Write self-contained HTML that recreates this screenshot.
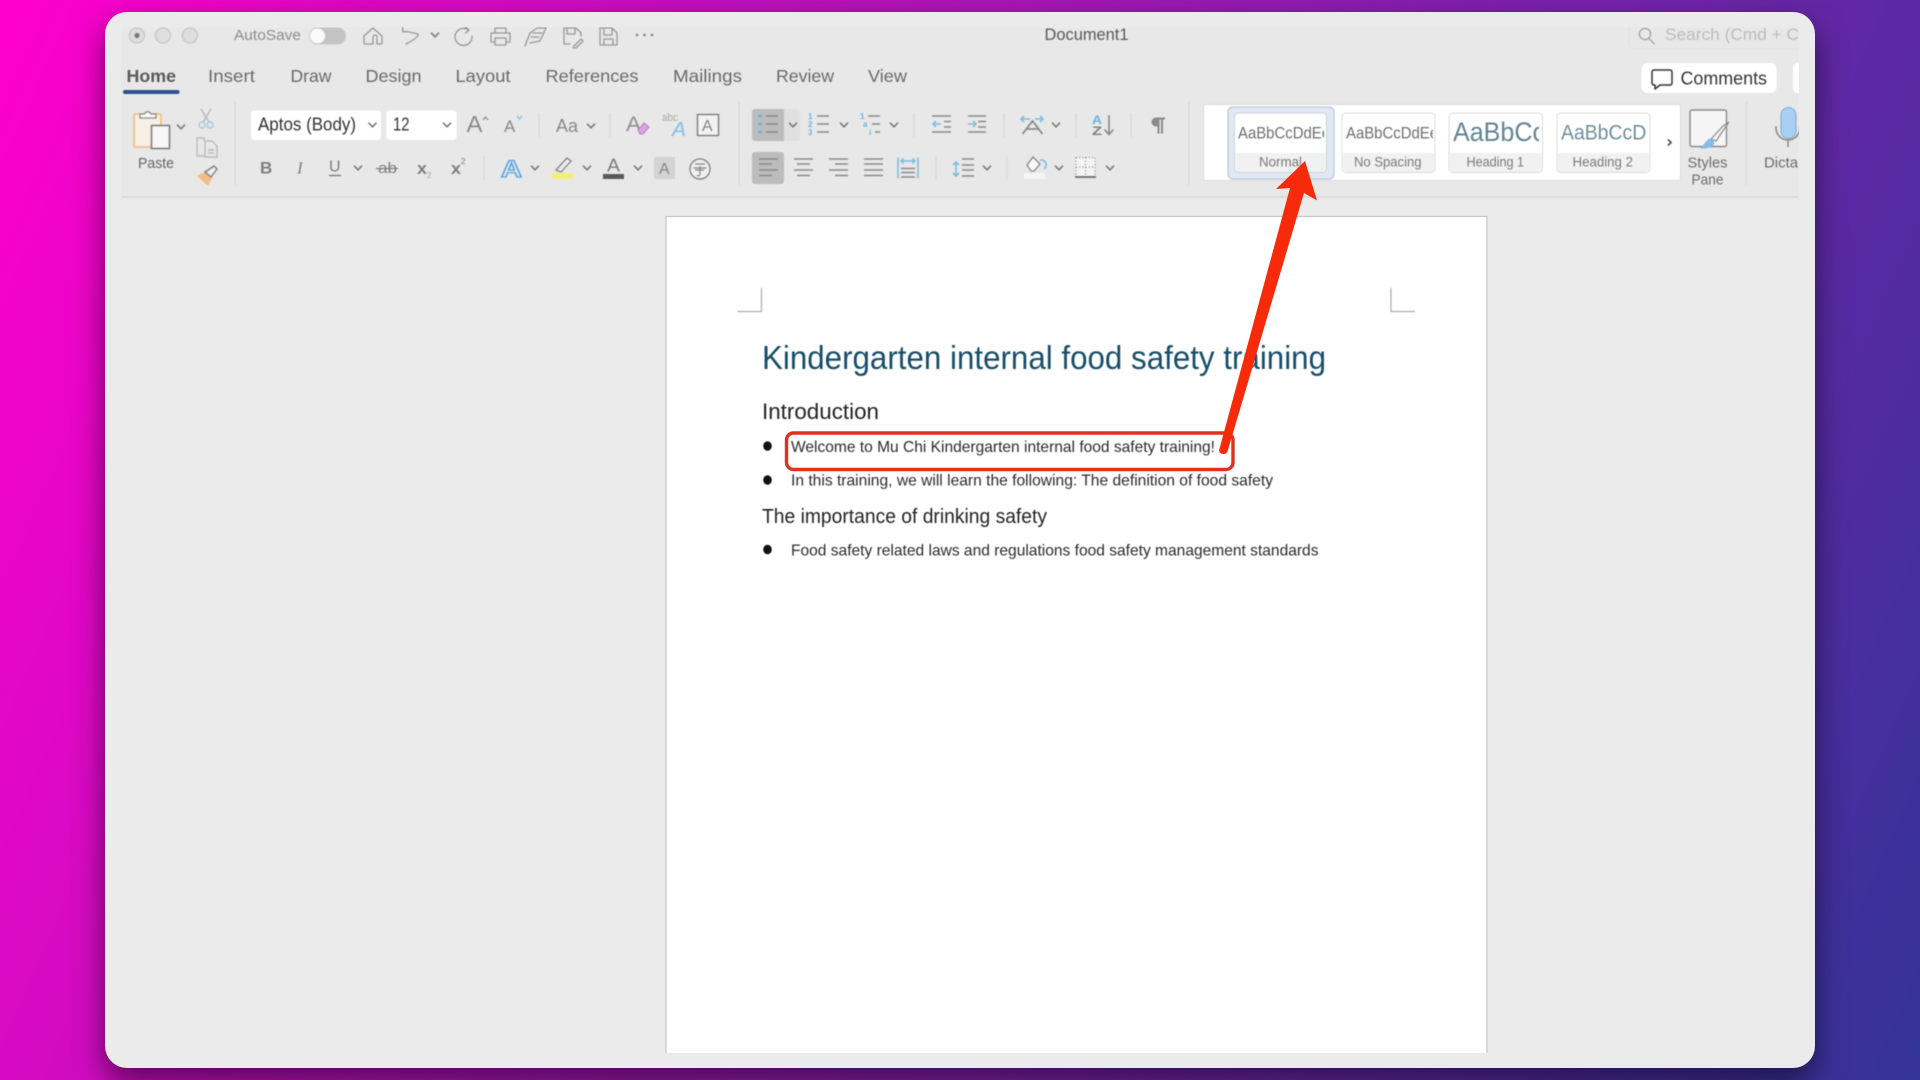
<!DOCTYPE html>
<html lang="en"><head><meta charset="utf-8"><title>Document1</title>
<style>
html,body{margin:0;padding:0;width:1920px;height:1080px;overflow:hidden}
body{background:linear-gradient(114deg,#ff00cc,#333399)}
#win{position:absolute;left:105px;top:12px;width:1710px;height:1056px;border-radius:22px;background:#ebebeb;box-shadow:0 14px 30px rgba(0,0,0,.55)}
svg{position:absolute;left:0;top:0}
text{font-family:"Liberation Sans",sans-serif}
.s{fill:none;stroke:#989898;stroke-width:1.3;stroke-linecap:round;stroke-linejoin:round}
.t{stroke:#8a8a8a;stroke-width:1.6;fill:none}
.b{stroke:#7fbce0;stroke-width:1.6;fill:none}
.sep{stroke:#d8d8d8;stroke-width:1.3}
</style></head><body>
<div id="win"></div>
<svg width="1920" height="1080" viewBox="0 0 1920 1080">
<defs>
<path id="c" d="M-3.5-1.8 0 1.8 3.5-1.800" fill="none" stroke="#7c7c7c" stroke-width="1.7" stroke-linecap="round" stroke-linejoin="round"/>
<clipPath id="in"><rect x="121" y="27" width="1678" height="1026"/></clipPath>
<clipPath id="g1"><rect x="1236" y="113" width="88" height="40"/></clipPath>
<clipPath id="g2"><rect x="1344" y="113" width="89" height="40"/></clipPath>
<clipPath id="g3"><rect x="1451" y="113" width="88" height="40"/></clipPath>
<clipPath id="g4"><rect x="1559" y="113" width="88" height="40"/></clipPath>
</defs>
<g clip-path="url(#in)" style="filter:blur(.6px)">
<rect x="121" y="27" width="1678" height="170" fill="#e8e8e8"/>
<rect x="121" y="196" width="1678" height="2" fill="#dadada"/>

<!-- title bar -->
<g fill="#dedede" stroke="#c6c6c6" stroke-width="1.3"><circle cx="137" cy="35.500" r="7.500"/><circle cx="163" cy="35.500" r="7.500"/><circle cx="190" cy="35.500" r="7.500"/></g>
<circle cx="137" cy="35.500" r="2.600" fill="#7c7c7c"/>
<text x="234" y="40" font-size="15" fill="#8c8c8c" textLength="67" lengthAdjust="spacingAndGlyphs">AutoSave</text>
<rect x="309" y="27.500" width="37" height="17" rx="8.500" fill="#c4c4c4"/><circle cx="317.500" cy="36" r="8" fill="#fbfbfb" stroke="#c9c9c9"/>
<path class="s" d="M364 36 373 28l9 8v7a1.500 1.500 0 0 1-1.500 1H377v-7a2 2 0 0 0-4 0v7h-7.500a1.500 1.500 0 0 1-1.500-1z"/>
<path class="s" d="M402.700 27v4.700h5.300l10 2.300c1 3-6 7-12 10"/>
<use href="#c" x="435" y="35"/>
<path class="s" d="M468.500 30a8.500 8.500 0 1 0 3.500 6M465 26.500l4 3.500-3.500 3"/>
<path class="s" d="M495 33v-5h11v5M491 33h19v9h-4M495 42h-4v-9M495 38h11v7h-11z"/>
<path class="s" d="M525 46l5-13 7-5h9l-6 13-10 2M533 33h9M531 37h8"/>
<path class="s" d="M564 28h12l5 5v3M564 28v16h6M567 28v6h8v-6M574 46l7-7 2 2-7 7h-3z"/>
<path class="s" d="M600 28h12l5 5v12h-17zM604 28v7h8v-7M604 45v-6h9v6"/>
<g fill="#8c8c8c"><circle cx="637" cy="35" r="1.400"/><circle cx="644.500" cy="35" r="1.400"/><circle cx="652" cy="35" r="1.400"/></g>
<text x="1044.500" y="40" font-size="16.500" fill="#585858" textLength="84" lengthAdjust="spacingAndGlyphs">Document1</text>
<rect x="1629" y="22" width="190" height="27" rx="6" fill="none" stroke="#e2e2e2"/>
<circle cx="1645" cy="34" r="5.600" fill="none" stroke="#a2a2a2" stroke-width="1.300"/><path fill="none" stroke="#a2a2a2" stroke-width="1.300" d="M1649 38.500 1654.500 44"/>
<text x="1665" y="40" font-size="17" fill="#bcbcbc" textLength="134" lengthAdjust="spacingAndGlyphs">Search (Cmd + C</text>

<!-- tabs -->
<g font-size="17.500" fill="#6a6a6a">
<text x="126.500" y="82" font-weight="700" fill="#5a5a5a" textLength="49.500" lengthAdjust="spacingAndGlyphs">Home</text>
<text x="208" y="82" textLength="47" lengthAdjust="spacingAndGlyphs">Insert</text>
<text x="290.500" y="82" textLength="41" lengthAdjust="spacingAndGlyphs">Draw</text>
<text x="365.500" y="82" textLength="56" lengthAdjust="spacingAndGlyphs">Design</text>
<text x="455.500" y="82" textLength="55" lengthAdjust="spacingAndGlyphs">Layout</text>
<text x="545.500" y="82" textLength="93" lengthAdjust="spacingAndGlyphs">References</text>
<text x="673" y="82" textLength="69" lengthAdjust="spacingAndGlyphs">Mailings</text>
<text x="776" y="82" textLength="58" lengthAdjust="spacingAndGlyphs">Review</text>
<text x="868" y="82" textLength="39" lengthAdjust="spacingAndGlyphs">View</text>
</g>
<rect x="123" y="90" width="56.500" height="4" rx="2" fill="#2c4f8e"/>
<rect x="1641.500" y="63" width="135" height="30" rx="6" fill="#fff"/>
<path d="M1654 70h16a2 2 0 0 1 2 2v11a2 2 0 0 1-2 2h-10l-5 4v-4h-1a2 2 0 0 1-2-2V72a2 2 0 0 1 2-2z" fill="none" stroke="#333" stroke-width="1.500" stroke-linejoin="round"/>
<text x="1680.500" y="84.500" font-size="18" fill="#333" textLength="86.500" lengthAdjust="spacingAndGlyphs">Comments</text>
<rect x="1793" y="63" width="14" height="30" rx="5" fill="#fff"/>

<!-- separators -->
<g class="sep">
<path d="M235 102v83M739 102v83M1189 102v83M1746.500 102v83"/>
<path d="M539 113v24M610 113v24M484 156v24M914 113v24M1004 113v24M1076 113v24M1131 113v24M936 156v24M1007 156v24"/>
</g>

<!-- clipboard group -->
<rect x="134" y="114" width="27" height="33" rx="1.500" fill="#f6efe4" stroke="#f2c48d" stroke-width="2"/>
<path d="M140 118v-4h4.500a3.500 3.500 0 0 1 6.500 0h5v4z" fill="#fafafa" stroke="#8c8c8c" stroke-width="1.300"/>
<rect x="151.500" y="125.500" width="18" height="23" fill="#f7f7f7" stroke="#808080" stroke-width="1.600"/>
<use href="#c" x="181" y="127"/>
<text x="138" y="168" font-size="15" fill="#666" textLength="36" lengthAdjust="spacingAndGlyphs">Paste</text>
<path d="M201 109l8 13M211 109l-8 13" fill="none" stroke="#b6bcc2" stroke-width="1.500"/>
<circle cx="202" cy="125" r="3" fill="none" stroke="#a9cbe0" stroke-width="1.500"/><circle cx="210" cy="125" r="3" fill="none" stroke="#a9cbe0" stroke-width="1.500"/>
<path d="M204 141v-3h-7v18h7M205 141h7l5 5v11h-12zM208 150h6M208 153h6" fill="none" stroke="#bcbcbc" stroke-width="1.400"/>
<path d="M197 176l9-5 6 7-4 8z" fill="#f3bd85"/><path d="M205 172l9-6 3 3-6 8z" fill="#ededed" stroke="#808080" stroke-width="1.400"/>

<!-- font row -->
<rect x="251" y="110.500" width="130" height="29.500" rx="3" fill="#fff"/>
<rect x="386.500" y="110.500" width="70" height="29.500" rx="3" fill="#fff"/>
<text x="258" y="130.500" font-size="18" fill="#333" textLength="98" lengthAdjust="spacingAndGlyphs">Aptos (Body)</text>
<text x="393" y="130.500" font-size="18" fill="#333" textLength="16.500" lengthAdjust="spacingAndGlyphs">12</text>
<use href="#c" x="372.500" y="125"/><use href="#c" x="447" y="125"/>
<text x="466.500" y="132" font-size="23" fill="#8a8a8a" textLength="16" lengthAdjust="spacingAndGlyphs">A</text>
<path d="M483 120l2.500-3 2.500 3" fill="none" stroke="#9a9a9a" stroke-width="1.400"/>
<text x="504" y="132" font-size="17" fill="#8a8a8a">A</text>
<path d="M517 116l2.500 3 2.500-3" fill="none" stroke="#8fc2e2" stroke-width="1.400"/>
<text x="556" y="132" font-size="18" fill="#8a8a8a" textLength="22" lengthAdjust="spacingAndGlyphs">Aa</text>
<use href="#c" x="591" y="126"/>
<text x="626" y="131" font-size="21" fill="#8e8e8e" textLength="15" lengthAdjust="spacingAndGlyphs">A</text>
<path d="M638 130l6-7 5 4-6 7h-3z" fill="#dba3dc" stroke="#b87fc0"/>
<text x="662" y="121" font-size="11" fill="#a8a8a8" textLength="16" lengthAdjust="spacingAndGlyphs">abc</text>
<text x="672" y="136" font-size="20" font-style="italic" fill="#7fc0e4" textLength="14" lengthAdjust="spacingAndGlyphs">A</text>
<rect x="697.500" y="114.500" width="21" height="21" fill="#f2f2f2" stroke="#7c7c7c" stroke-width="1.400"/>
<text x="702" y="131" font-size="16" fill="#848484">A</text>

<g fill="#7f7f7f">
<text x="260" y="173.500" font-size="17" font-weight="700">B</text>
<text x="297" y="173.500" font-size="17" font-style="italic" style="font-family:'Liberation Serif',serif">I</text>
<text x="329" y="171.500" font-size="16">U</text>
<text x="378" y="173" font-size="15" textLength="19" lengthAdjust="spacingAndGlyphs">ab</text>
<text x="417" y="174" font-size="17" font-weight="700" textLength="10" lengthAdjust="spacingAndGlyphs">x</text>
<text x="451" y="174" font-size="17" font-weight="700" textLength="10" lengthAdjust="spacingAndGlyphs">x</text>
</g>
<path d="M329 175.500h12" stroke="#7f7f7f" stroke-width="1.400"/><path d="M376 168.500h22" stroke="#7f7f7f" stroke-width="1.200"/>
<use href="#c" x="358" y="168"/>
<text x="427" y="178" font-size="8" fill="#6fb4dc">2</text><text x="461" y="164" font-size="8" fill="#777">2</text>
<text x="501" y="177" font-size="24" font-weight="700" fill="#d7e8f5" stroke="#5ba4d8" stroke-width="1.300" textLength="21" lengthAdjust="spacingAndGlyphs">A</text>
<use href="#c" x="535" y="168"/>
<path d="M556 170l11-12 4 3-10 11z" fill="#ececec" stroke="#858585" stroke-width="1.300"/>
<rect x="552" y="173" width="21" height="6" fill="#f4ee7c"/>
<use href="#c" x="587" y="168"/>
<text x="607" y="171.500" font-size="18" fill="#7f7f7f" textLength="13" lengthAdjust="spacingAndGlyphs">A</text>
<rect x="603" y="174" width="21" height="5" fill="#595959"/>
<use href="#c" x="638" y="168"/>
<rect x="654" y="157" width="21" height="22" fill="#d3d3d3"/><text x="659" y="174" font-size="16" fill="#858585">A</text>
<circle cx="700" cy="169" r="10" fill="#f0f0f0" stroke="#888" stroke-width="1.400"/>
<path d="M695 164h10M693.500 168h13M700 166v8c0 1.500-1 2-3 1.500M695 170h9" fill="none" stroke="#888" stroke-width="1.200"/>

<!-- paragraph row 1 -->
<rect x="752" y="109" width="48" height="32" rx="3" fill="#e0e0e0"/>
<path d="M755 109h29v32h-29a3 3 0 0 1-3-3v-26a3 3 0 0 1 3-3z" fill="#bcbcbc"/>
<g fill="#6cb4e0"><rect x="758" y="114.500" width="4" height="3"/><rect x="758" y="122.500" width="4" height="3"/><rect x="758" y="130.500" width="4" height="3"/></g>
<path class="t" d="M766 116h12M766 124h12M766 132h12"/>
<use href="#c" x="793" y="125"/>
<g font-size="8" fill="#6cb4e0" font-weight="700"><text x="808" y="119">1</text><text x="808" y="127">2</text><text x="808" y="135">3</text></g>
<path class="t" d="M817 116h12M817 124h12M817 132h12"/>
<use href="#c" x="844" y="125"/>
<g font-size="8" fill="#6cb4e0" font-weight="700"><text x="860" y="119">1</text><text x="863" y="127">a</text><text x="869" y="135">i</text></g>
<path class="t" d="M868 116h12M872 124h8M875 132h5"/>
<use href="#c" x="894" y="125"/>
<path class="t" d="M932 116h19M932 132h19M944 121.500h7M944 127h7"/><path class="b" d="M941 124h-8M936 121l-3 3 3 3"/>
<path class="t" d="M968 116h18M968 132h18M978 121.500h8M978 127h8"/><path class="b" d="M968 124h8M973 121l3 3-3 3"/>
<path class="t" d="M1022.500 134l10-13 10 13M1026 129h13" style="stroke-width:1.800"/>
<path class="b" d="M1021 119h9M1024 116l-3 3 3 3M1035 119h8M1040 116l3 3-3 3"/>
<use href="#c" x="1056" y="125"/>
<text x="1092" y="124" font-size="12" font-weight="700" fill="#6cb4e0" textLength="10" lengthAdjust="spacingAndGlyphs">A</text>
<text x="1092" y="135" font-size="12" font-weight="700" fill="#7f7f7f" textLength="10" lengthAdjust="spacingAndGlyphs">Z</text>
<path class="t" d="M1109 115v19M1104.500 129.500l4.500 5 4.500-5"/>
<path d="M1165 117.500h-9a4.500 4.500 0 0 0 0 9h1.500v7h2v-14h1.500v14h2v-14h2z" fill="#8a8a8a"/>

<!-- paragraph row 2 -->
<rect x="752" y="152" width="32" height="32" rx="3" fill="#bcbcbc"/>
<path class="t" d="M759 159h19M759 164h13M759 170h19M759 175.500h13"/>
<path class="t" d="M794 159h19M797 164h13M794 170h19M797 175.500h13"/>
<path class="t" d="M829 159h19M835 164h13M829 170h19M835 175.500h13"/>
<path class="t" d="M864 159h19M864 164h19M864 170h19M864 175.500h19"/>
<path class="b" d="M898 157.500v21M918 157.500v21M901 161h14M903.500 158.500l-2.500 2.500 2.500 2.500M912.500 158.500l2.500 2.500-2.500 2.500"/>
<path class="t" d="M901 168.500h14M901 172.500h14M901 177h14"/>
<path class="b" d="M956 162v14M953 165l3-3 3 3M953 173l3 3 3-3"/>
<path class="t" d="M962 159h12M962 165h12M962 170h12M962 176h12"/>
<use href="#c" x="987" y="168"/>
<path d="M1027 165l6-8 7 7-6 7h-3z" fill="#fafafa" stroke="#858585" stroke-width="1.300"/>
<path d="M1040 160a5 5 0 0 1 4 9" class="b"/>
<rect x="1024" y="173" width="21" height="6" fill="#f4f4f4"/>
<use href="#c" x="1059" y="168"/>
<rect x="1076" y="157.500" width="19" height="19" fill="#f3f3f3"/>
<path d="M1076 157.500h19v19M1076 157.500v19M1085.500 157.500v19M1076 167h19" fill="none" stroke="#8a8a8a" stroke-width="1.200" stroke-dasharray="1 2.200"/>
<rect x="1075" y="176" width="21" height="2" fill="#777"/>
<use href="#c" x="1110" y="168"/>

<!-- styles gallery -->
<rect x="1203.500" y="104.500" width="477" height="76" rx="2" fill="#fff" stroke="#dbdbdb"/>
<rect x="1228" y="107" width="106" height="72" rx="5" fill="#e1e8f1" stroke="#b9c9dd" stroke-width="1.300"/>
<g fill="#f1f1f1" stroke="#dcdcdc">
<rect x="1234.500" y="113" width="92" height="59.500" rx="4" fill="#fff" stroke="#ccd3dc"/>
<rect x="1342" y="113" width="93" height="59.500" rx="4" fill="#fff"/>
<rect x="1449" y="113" width="93.500" height="59.500" rx="4" fill="#fff"/>
<rect x="1557" y="113" width="93" height="59.500" rx="4" fill="#fff"/>
</g>
<g fill="#f1f1f1">
<path d="M1235.500 153h90v15a4 4 0 0 1-4 4h-82a4 4 0 0 1-4-4z"/>
<path d="M1343 153h91v15a4 4 0 0 1-4 4h-83a4 4 0 0 1-4-4z"/>
<path d="M1450 153h91.500v15a4 4 0 0 1-4 4h-83.500a4 4 0 0 1-4-4z"/>
<path d="M1558 153h91v15a4 4 0 0 1-4 4h-83a4 4 0 0 1-4-4z"/>
</g>
<g font-size="16.500" fill="#6f6f6f">
<g clip-path="url(#g1)"><text x="1238" y="138.500" textLength="92" lengthAdjust="spacingAndGlyphs">AaBbCcDdEe</text></g>
<g clip-path="url(#g2)"><text x="1346" y="138.500" textLength="92" lengthAdjust="spacingAndGlyphs">AaBbCcDdEe</text></g>
</g>
<g clip-path="url(#g3)"><text x="1453" y="141" font-size="27" fill="#628493" textLength="92" lengthAdjust="spacingAndGlyphs">AaBbCc</text></g>
<g clip-path="url(#g4)"><text x="1561" y="139.500" font-size="21.500" fill="#6c8e9c" textLength="96" lengthAdjust="spacingAndGlyphs">AaBbCcDd</text></g>
<g font-size="13.500" fill="#7a7a7a">
<text x="1259" y="166.500" textLength="43" lengthAdjust="spacingAndGlyphs">Normal</text>
<text x="1354" y="166.500" textLength="67.500" lengthAdjust="spacingAndGlyphs">No Spacing</text>
<text x="1466.500" y="166.500" textLength="57.500" lengthAdjust="spacingAndGlyphs">Heading 1</text>
<text x="1572.500" y="166.500" textLength="60.500" lengthAdjust="spacingAndGlyphs">Heading 2</text>
</g>
<path d="M1668 139.500l3 3-3 3" fill="none" stroke="#555" stroke-width="1.800"/>

<!-- styles pane -->
<rect x="1690" y="110" width="36.500" height="36.500" rx="2" fill="#f5f5f5" stroke="#8a8a8a" stroke-width="1.400"/>
<path d="M1723 126l6-4-13 19-5-2z" fill="#f2f2f2" stroke="#8a8a8a" stroke-width="1.200"/>
<path d="M1700 148c3-1 5-7 9-9 3-1 6 2 5 5-1 3-9 6-14 4z" fill="#84bce6"/>
<text x="1687.500" y="167.500" font-size="15" fill="#6c6c6c" textLength="40" lengthAdjust="spacingAndGlyphs">Styles</text>
<text x="1691.500" y="184.500" font-size="15" fill="#6c6c6c" textLength="32" lengthAdjust="spacingAndGlyphs">Pane</text>

<!-- dictate -->
<path d="M1776 126v2a12 12 0 0 0 24 0v-2M1788 140v7" fill="none" stroke="#8c8c8c" stroke-width="1.600"/>
<rect x="1781" y="107.500" width="15" height="31" rx="7.500" fill="#a9d0f3" stroke="#7fa9cf"/>
<text x="1764" y="167.500" font-size="15" fill="#6c6c6c" textLength="34" lengthAdjust="spacingAndGlyphs">Dicta</text>
</g>

<!-- page -->
<rect x="666" y="217" width="821" height="836" fill="#fff"/>
<path d="M666 1053V216.500H1487V1053" fill="none" stroke="#cacaca" stroke-width="1.300"/>
<g style="filter:blur(.4px)">
<path d="M737.500 311.500H761.500V288M1391 288V311.500H1415" fill="none" stroke="#aaa" stroke-width="1.200"/>
<text x="762" y="369" font-size="33" fill="#174d68" textLength="564" lengthAdjust="spacingAndGlyphs">Kindergarten internal food safety training</text>
<text x="762" y="419" font-size="22" fill="#222" textLength="117" lengthAdjust="spacingAndGlyphs">Introduction</text>
<g font-size="15.800" fill="#2a2a2a">
<text x="791" y="452" textLength="424" lengthAdjust="spacingAndGlyphs">Welcome to Mu Chi Kindergarten internal food safety training!</text>
<text x="791" y="485.500" textLength="482" lengthAdjust="spacingAndGlyphs">In this training, we will learn the following: The definition of food safety</text>
<text x="791" y="555.500" textLength="527.500" lengthAdjust="spacingAndGlyphs">Food safety related laws and regulations food safety management standards</text>
</g>
<text x="762" y="523" font-size="20" fill="#222" textLength="285" lengthAdjust="spacingAndGlyphs">The importance of drinking safety</text>
<g fill="#111"><ellipse cx="767.500" cy="446" rx="4.300" ry="4.800"/><ellipse cx="767.500" cy="480" rx="4.300" ry="4.800"/><ellipse cx="767.500" cy="549.500" rx="4.300" ry="4.800"/></g>
</g>

<!-- annotations -->
<rect x="786.500" y="433" width="446.500" height="36.500" rx="7" fill="none" stroke="#e0301f" stroke-width="3.400"/>
<path d="M1305 161 1317 200.500 1304 193 1227.500 451.500c-1.500 4-8 3-8.500-1L1290 188 1276 189z" fill="#f72a0a"/>
</svg>
</body></html>
